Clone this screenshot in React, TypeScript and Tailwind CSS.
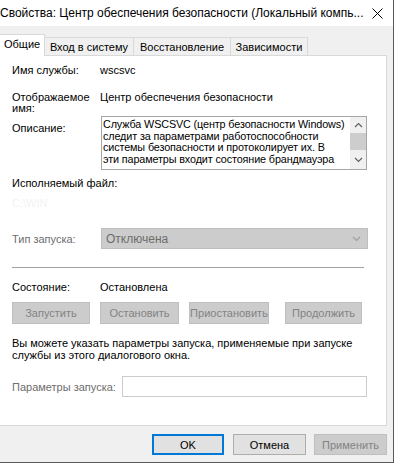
import React from 'react';

const font = { fontFamily: '"Liberation Sans", Arial, sans-serif' };

function Chevron({ up, color, className }: { up?: boolean; color: string; className?: string }) {
  return (
    <svg width="9" height="6" viewBox="0 0 9 6" className={className}>
      <path d={up ? 'M1 5 L4.5 1.5 L8 5' : 'M1 1 L4.5 4.5 L8 1'} fill="none" stroke={color} strokeWidth="1.2" />
    </svg>
  );
}

function PanelButton({ label, w, ml }: { label: string; w: string; ml: string }) {
  return (
    <div className={`${w} ${ml} h-[22px] bg-[#cccccc] border border-[#bfbfbf] flex items-center justify-center text-[#838383]`}>
      {label}
    </div>
  );
}

export default function App() {
  return (
    <div className="w-[397px] h-[466px] bg-white text-[11px] leading-[12px] text-black" style={font}>
      <div className="w-[394px] h-[463px] flex flex-col border-r border-b border-[#595959]">
        {/* Title bar */}
        <div className="h-[26px] bg-white flex items-center justify-between pr-[10px]">
          <span className="text-[12px] text-black whitespace-nowrap">
            Свойства: Центр обеспечения безопасности (Локальный компь...
          </span>
          <svg width="11" height="11" viewBox="0 0 11 11">
            <path d="M0.5 0.5 L10.5 10.5 M10.5 0.5 L0.5 10.5" stroke="#000" strokeWidth="1" />
          </svg>
        </div>

        <div className="flex-1 bg-[#f0f0f0] flex flex-col">
          {/* Tabs */}
          <div className="h-[29px] flex items-end">
            <div className="relative z-10 w-[45px] h-[22px] -mb-px bg-white border-r border-t border-[#d9d9d9] flex items-start pt-[3px] pl-[4px]">
              Общие
            </div>
            <div className="w-[89px] h-[18px] border-t border-r border-[#d9d9d9] flex items-center justify-center">
              Вход в систему
            </div>
            <div className="w-[97px] h-[18px] border-t border-r border-[#d9d9d9] flex items-center justify-center">
              Восстановление
            </div>
            <div className="w-[77px] h-[18px] border-t border-r border-[#d9d9d9] flex items-center justify-center">
              Зависимости
            </div>
          </div>

          {/* Panel */}
          <div className="w-[387px] h-[371px] bg-white border-t border-r border-b border-[#d9d9d9] pl-[12px] flex flex-col">
            <div className="mt-[8px] h-[12px] flex">
              <span className="w-[88px]">Имя службы:</span>
              <span>wscsvc</span>
            </div>

            <div className="mt-[16px] h-[22px] flex leading-[11px]">
              <span className="w-[88px]">
                Отображаемое
                <br />
                имя:
              </span>
              <span>Центр обеспечения безопасности</span>
            </div>

            <div className="mt-[2px] flex">
              <span className="w-[89px] pt-[6px]">Описание:</span>
              <div className="w-[266px] h-[54px] border border-[#a6a6a6] flex">
                <div className="flex-1 pl-[1px] pt-[2px] text-[10.8px] tracking-[-0.12px] leading-[11.7px] overflow-hidden whitespace-nowrap">
                  Служба WSCSVC (центр безопасности Windows)
                  <br />
                  следит за параметрами работоспособности
                  <br />
                  системы безопасности и протоколирует их. В
                  <br />
                  эти параметры входит состояние брандмауэра
                </div>
                <div className="w-[16px] bg-[#f0f0f0] flex flex-col items-center">
                  <div className="h-[16px] flex items-center justify-center">
                    <Chevron up color="#606060" />
                  </div>
                  <div className="w-[16px] h-[17px] bg-[#cdcdcd]" />
                  <div className="flex-1 flex items-center justify-center">
                    <Chevron color="#606060" />
                  </div>
                </div>
              </div>
            </div>

            <div className="mt-[7px] h-[12px]">Исполняемый файл:</div>
            <div className="mt-[8px] h-[12px] text-[#f3f3f3]">C:\WIN</div>

            <div className="mt-[19px] h-[21px] flex items-center">
              <span className="w-[89px] text-[#6d6d6d]">Тип запуска:</span>
              <div className="w-[267px] h-[21px] bg-[#cccccc] border border-[#bfbfbf] flex items-center justify-between pl-[4px] pr-[6px] text-[#6d6d6d]">
                <span className="text-[12px]">Отключена</span>
                <Chevron color="#a0a0a0" />
              </div>
            </div>

            <div className="mt-[18px] w-[352px] h-px bg-[#a0a0a0]" />

            <div className="mt-[13px] h-[12px] flex">
              <span className="w-[88px]">Состояние:</span>
              <span>Остановлена</span>
            </div>

            <div className="mt-[9px] flex">
              <PanelButton label="Запустить" w="w-[78px]" ml="ml-0" />
              <PanelButton label="Остановить" w="w-[79px]" ml="ml-[10px]" />
              <PanelButton label="Приостановить" w="w-[80px]" ml="ml-[10px]" />
              <PanelButton label="Продолжить" w="w-[77px]" ml="ml-[16px]" />
            </div>

            <div className="mt-[13px] h-[24px]">
              Вы можете указать параметры запуска, применяемые при запуске
              <br />
              службы из этого диалогового окна.
            </div>

            <div className="mt-[15px] h-[21px] flex items-center">
              <span className="w-[110px] text-[#6d6d6d]">Параметры запуска:</span>
              <div className="w-[245px] h-[21px] bg-white border border-[#cccccc]" />
            </div>
          </div>

          {/* Dialog buttons */}
          <div className="mt-[8px] h-[21px] w-[387px] flex justify-end">
            <div className="w-[72px] h-[21px] bg-[#e1e1e1] border-2 border-[#0078d7] flex items-center justify-center">
              OK
            </div>
            <div className="ml-[9px] w-[73px] h-[21px] bg-[#e1e1e1] border border-[#adadad] flex items-center justify-center">
              Отмена
            </div>
            <div className="ml-[8px] w-[73px] h-[21px] bg-[#cccccc] border border-[#bfbfbf] flex items-center justify-center text-[#838383]">
              Применить
            </div>
          </div>
        </div>
      </div>
    </div>
  );
}
